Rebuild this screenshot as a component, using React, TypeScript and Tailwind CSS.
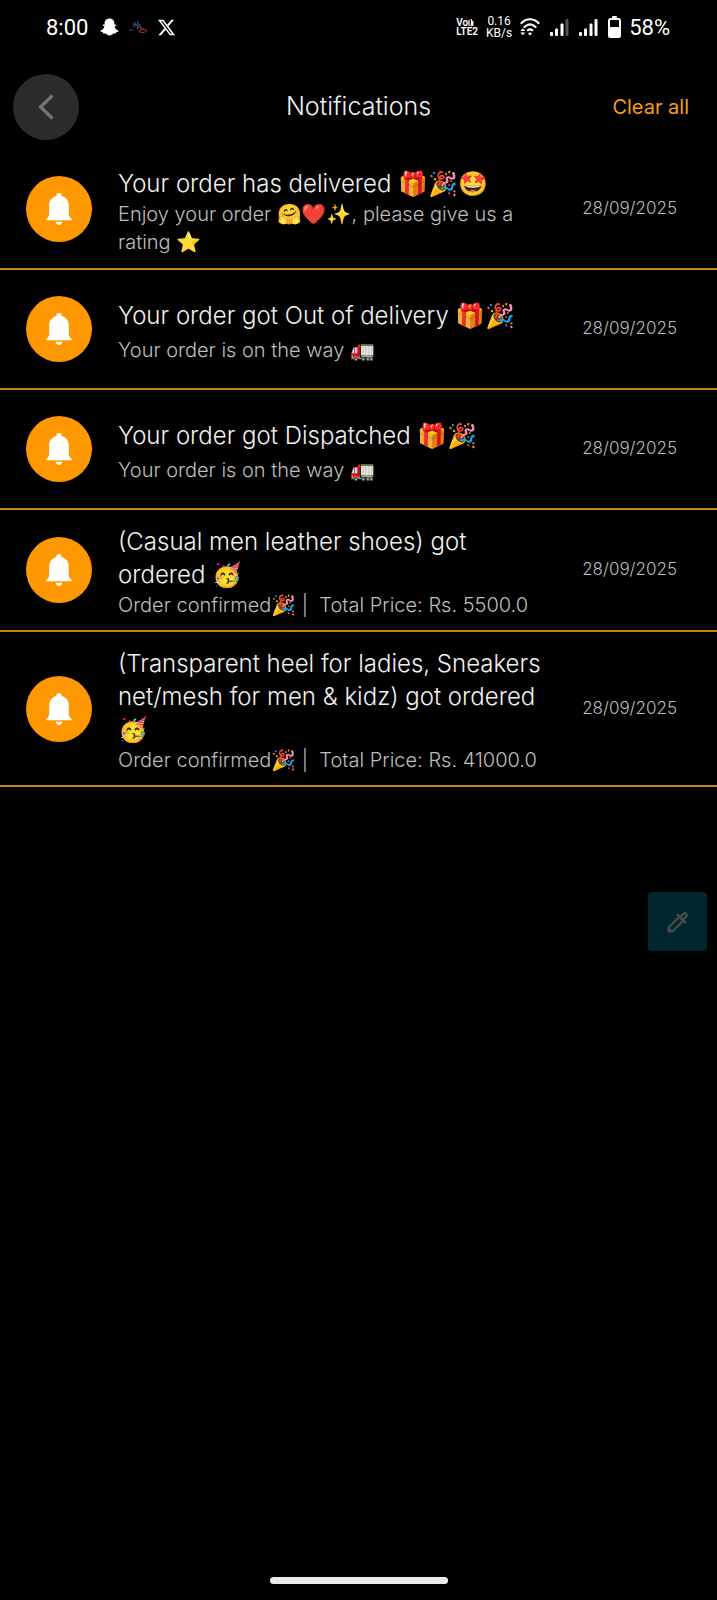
import { FaXTwitter } from "react-icons/fa6";
import { MdOutlineColorize } from "react-icons/md";

type Notice = { title: string; detail: string; date: string; tight?: boolean };

const notices: Notice[] = [
  { title: "Your order has delivered 🎁🎉🤩", detail: "Enjoy your order 🤗❤️✨, please give us a rating ⭐", date: "28/09/2025", tight: true },
  { title: "Your order got Out of delivery 🎁🎉", detail: "Your order is on the way 🚛", date: "28/09/2025" },
  { title: "Your order got Dispatched 🎁🎉", detail: "Your order is on the way 🚛", date: "28/09/2025" },
  { title: "(Casual men leather shoes) got ordered 🥳", detail: "Order confirmed🎉 |  Total Price: Rs. 5500.0", date: "28/09/2025", tight: true },
  { title: "(Transparent heel for ladies, Sneakers net/mesh for men & kidz) got ordered 🥳", detail: "Order confirmed🎉 |  Total Price: Rs. 41000.0", date: "28/09/2025", tight: true },
];

function Ghost() {
  return (
    <svg viewBox="0 0 19 18" className="h-[18px] w-[19px]" fill="#fff" aria-hidden="true">
      <path d="M9.500.5c3 0 4.900 2.200 4.900 4.800v1.400l1.300-.3c.8.1.9.9.2 1.300l-1.300.8c.5 2 1.700 3.300 3.500 3.900.6.300.5 1-.2 1.300l-1.700.6-.5 1.200-2.300.1c-1.200.9-2.300 1.900-3.900 1.900s-2.700-1-3.900-1.900l-2.300-.1-.5-1.200-1.700-.6c-.7-.3-.8-1-.2-1.300 1.800-.6 3-1.900 3.500-3.900l-1.300-.8c-.7-.4-.6-1.200.2-1.300l1.300.3V5.300C4.600 2.700 6.500.5 9.500.5Z" />
    </svg>
  );
}

function Bell() {
  return (
    <svg viewBox="0 0 28 34" className="h-[34px] w-7" fill="#fff" aria-hidden="true">
      <path d="M14 1c-1.600 0-2.600 1-2.600 2.300v.7C7 5.200 4.200 8.700 4.200 13.200V22c0 2-1 3.400-2.600 4.700-.9.800-.5 1.600.6 1.600h23.600c1.100 0 1.500-.8.600-1.600-1.600-1.300-2.600-2.700-2.600-4.700v-8.800c0-4.500-2.800-8-7.200-9.200v-.7C16.600 2 15.600 1 14 1Z" />
      <path d="M10.700 29.800h6.600C17 31.800 15.800 33 14 33s-3-1.200-3.300-3.200Z" />
    </svg>
  );
}

function Scribble() {
  return (
    <svg viewBox="0 0 18 14" className="h-3.5 w-[18px]" fill="none" aria-hidden="true">
      <path d="M3.500 5h8M5 8l1.500-6M8.500 1v8M4 3l6 4M0 10h4.500M9.500 3l2.500 4" stroke="#334a86" strokeWidth="1" />
      <path d="M8 8.500c3-2 5-1 6 1.500M10 11.500c2-3 6-3 7.500-1-1 2.500-5 2.500-7.500 1Z" stroke="#9a2732" strokeWidth="1.200" />
    </svg>
  );
}

function Wifi() {
  return (
    <svg viewBox="0 0 20 18" className="h-[18px] w-5" fill="none" stroke="#fff" strokeWidth="2.200" strokeLinecap="round" aria-hidden="true">
      <path d="M1.500 5c5-5 12-5 17 0M4.500 9c3.500-3.300 7.500-3.300 11 0M8 12.200c1.400-1.200 2.800-1.200 4.200 0" />
      <path d="M10 14.300 12 15.500 10 17.500 8 15.500Z" fill="#fff" stroke="none" />
      <path d="M.3 13h5L2.800 10.300ZM.3 14.500h5L2.800 17.200Z" fill="#fff" stroke="none" />
    </svg>
  );
}

function Signal({ weak = false }: { weak?: boolean }) {
  return (
    <svg viewBox="0 0 19 18" className="h-[18px] w-[19px]" fill="#fff" aria-hidden="true">
      <rect x="0" y="14" width="3" height="4" rx="1" />
      <rect x="5" y="10.500" width="3" height="7.500" rx="1" />
      <rect x="10.500" y="5.500" width="3" height="12.500" rx="1" />
      <rect x="15.500" y="1" width="3" height="17" rx="1" fill={weak ? "#555" : "#fff"} />
    </svg>
  );
}

function Volte() {
  return (
    <div className="flex flex-col items-start text-[10px] leading-[9px] font-semibold">
      <span className="flex items-center">
        Vo
        <svg viewBox="0 0 6 9" className="h-[9px] w-1.5" fill="none" stroke="#fff" strokeWidth="1.200" aria-hidden="true">
          <path d="M1 2v6M3 1c1 2 1 5 0 7M4.800 3v5" />
        </svg>
      </span>
      <span>LTE2</span>
    </div>
  );
}

function Battery() {
  return (
    <svg viewBox="0 0 13 22" className="h-[22px] w-[13px]" fill="none" aria-hidden="true">
      <rect x="4" y="0" width="5" height="3" rx="1" fill="#fff" />
      <rect x="1" y="3" width="11" height="18" rx="1.500" stroke="#fff" strokeWidth="2" />
      <rect x="1" y="11" width="11" height="10" fill="#fff" />
    </svg>
  );
}

export default function App() {
  return (
    <div className="flex min-h-screen flex-col bg-black font-['Inter','Noto_Color_Emoji',sans-serif] text-white">
      <div className="flex h-[54px] items-center justify-between pr-[47px] pl-[46px] font-['Roboto',sans-serif]">
        <div className="flex items-center">
          <span className="text-[22px]">8:00</span>
          <span className="ml-3"><Ghost /></span>
          <span className="ml-2.5"><Scribble /></span>
          <FaXTwitter className="ml-2.5 size-[19px]" />
        </div>
        <div className="flex items-center">
          <Volte />
          <div className="ml-2 flex flex-col items-center text-[12px] leading-[12px]">
            <span>0.16</span>
            <span>KB/s</span>
          </div>
          <span className="ml-2"><Wifi /></span>
          <span className="ml-2.5"><Signal weak /></span>
          <span className="ml-2.5"><Signal /></span>
          <span className="ml-2.5"><Battery /></span>
          <span className="ml-2 text-[22px]">58%</span>
        </div>
      </div>

      <header className="mt-2.5 grid h-[86px] grid-cols-[1fr_auto_1fr] items-center px-[13px]">
        <button type="button" aria-label="Back" className="flex size-[66px] items-center justify-center rounded-full bg-[#2b2b2b]">
          <svg viewBox="0 0 16 26" className="h-[26px] w-4" fill="none" stroke="#757575" strokeWidth="3.200" aria-hidden="true">
            <path d="M14.500 1.500 2.500 13l12 11.500" />
          </svg>
        </button>
        <h1 className="text-[25px] font-light text-[#f0f0f0]">Notifications</h1>
        <button type="button" className="justify-self-end pr-[15px] text-[20px] text-[#f79a1f]">Clear all</button>
      </header>

      <main>
        <ul>
          {notices.map((n) => (
            <li key={n.title} className="flex min-h-[120px] items-center border-b-2 border-[#c87f22] py-[11px] pr-10 pl-[26px]">
              <span className="flex size-[66px] shrink-0 items-center justify-center rounded-full bg-[#ff9800]">
                <Bell />
              </span>
              <div className={n.tight ? "ml-[26px] min-w-0 flex-1 pt-1 pr-8" : "ml-[26px] flex min-w-0 flex-1 flex-col gap-1 pt-1 pr-8"}>
                <h2 className="text-2xl leading-[33px] font-light text-[#f0f0f0]">{n.title}</h2>
                <p className="text-[20px] leading-7 font-light whitespace-pre-wrap text-[#bdbdbd]">{n.detail}</p>
              </div>
              <time className="shrink-0 text-[17px] font-light text-[#bdbdbd]">{n.date}</time>
            </li>
          ))}
        </ul>
      </main>

      <div className="mt-[105px] mr-2.5 self-end">
        <button type="button" aria-label="Pick a colour" className="flex size-[59px] items-center justify-center rounded-sm bg-[#00272e]">
          <MdOutlineColorize className="size-7 text-[#4a4a4a]" />
        </button>
      </div>

      <footer className="mt-auto flex justify-center pb-4">
        <div className="h-[7px] w-[178px] rounded-full bg-[#ebebeb]" />
      </footer>
    </div>
  );
}
